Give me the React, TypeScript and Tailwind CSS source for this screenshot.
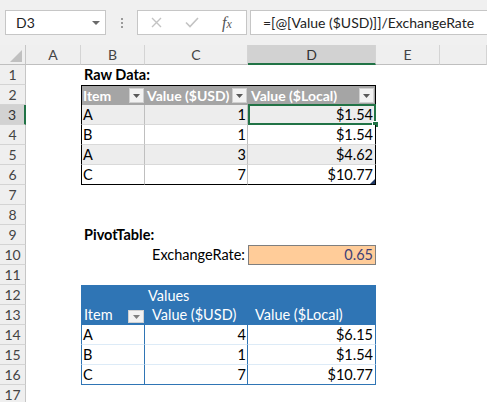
import clsx from 'clsx';
import type { ReactNode } from 'react';

const GRID = 'grid grid-cols-[26px_55px_64px_103px_128px_64px_1fr]';

function C({ className, children }: { className?: string; children?: ReactNode }) {
  return (
    <div className={clsx('relative h-[20px] flex items-center whitespace-nowrap text-[14.5px]', className)}>{children}</div>
  );
}

function Row({ n, sel, children }: { n: number; sel?: boolean; children: ReactNode }) {
  return (
    <div className={GRID}>
      <div
        className={clsx(
          'h-[20px] flex items-center justify-center text-[14px] border-b border-b-[#d4d4d4]',
          sel ? 'bg-[#d2d2d2] border-r-2 border-r-[#217346] text-[#333]' : 'bg-[#efefef] border-r border-r-[#c6c6c6] text-[#444]'
        )}
      >
        {n}
      </div>
      {children}
    </div>
  );
}

function Blank({ count }: { count: number }) {
  return (
    <>
      {Array.from({ length: count }).map((_, i) => (
        <C key={i} />
      ))}
    </>
  );
}

function DropButton({ pivot }: { pivot?: boolean }) {
  return (
    <div
      className={clsx(
        'ml-auto shrink-0 flex items-center justify-center bg-[#f2f2f2] border border-[#d0d0d0]',
        pivot ? 'w-[16px] h-[13px] mr-[1px] self-end mb-[2px]' : 'w-[15px] h-[15px] mr-[1px]'
      )}
    >
      <svg width="7" height="4" viewBox="0 0 7 4">
        <path d="M0 0h7L3.5 4z" fill={pivot ? '#7f7f7f' : '#595959'} />
      </svg>
    </div>
  );
}

function RawRow({ n, item, usd, local, band, last, sel }: { n: number; item: string; usd: string; local: string; band?: boolean; last?: boolean; sel?: boolean }) {
  const bg = band ? 'bg-[#ededed]' : 'bg-white';
  const bottom = last ? 'border-b border-b-black' : 'border-b border-b-[#d9d9d9]';
  return (
    <Row n={n} sel={sel}>
      <C />
      <C className={clsx(bg, bottom, 'border-l border-l-black border-r border-r-[#bfbfbf] pl-[1px]')}>{item}</C>
      <C className={clsx(bg, bottom, 'border-r border-r-[#bfbfbf] justify-end pr-[1px]')}>{usd}</C>
      <C className={clsx(bg, bottom, 'border-r border-r-black justify-end pr-[2px]')}>
        {local}
        {sel && (
          <>
            <div className="absolute -top-[1px] left-0 -right-[1px] -bottom-[1px] border-2 border-[#217346]" />
            <div className="absolute -right-[4px] -bottom-[4px] w-[7px] h-[7px] bg-[#217346] border border-white" />
          </>
        )}
        {last && (
          <svg className="absolute right-0 bottom-0" width="5" height="5" viewBox="0 0 5 5">
            <path d="M5 0v5H0z" fill="#1f3864" />
          </svg>
        )}
      </C>
      <Blank count={2} />
    </Row>
  );
}

function PivotRow({ n, item, usd, local, last }: { n: number; item: string; usd: string; local: string; last?: boolean }) {
  const bottom = last ? 'border-b border-b-[#2f75b5]' : 'border-b border-b-[#ddebf7]';
  return (
    <Row n={n}>
      <C />
      <C className={clsx(bottom, 'border-l border-l-[#2f75b5] border-r border-r-[#2f75b5] pl-[1px]')}>{item}</C>
      <C className={clsx(bottom, 'border-r border-r-[#2f75b5] justify-end pr-[1px]')}>{usd}</C>
      <C className={clsx(bottom, 'border-r border-r-[#2f75b5] justify-end pr-[2px]')}>{local}</C>
      <Blank count={2} />
    </Row>
  );
}

export default function App() {
  return (
    <div className="w-[487px] h-[402px] overflow-hidden bg-white text-black font-['Lato','Liberation_Sans',sans-serif]">
      {/* Name box + formula bar */}
      <div className="h-[45px] bg-[#f0f0f0] flex items-center">
        <div className="ml-[5px] w-[101px] h-[25px] bg-white border border-[#c6c6c6] flex items-center pl-[10px] pr-[5px] text-[14px] text-[#222]">
          <span>D3</span>
          <svg className="ml-auto" width="8" height="4" viewBox="0 0 8 4">
            <path d="M0 0h8L4 4z" fill="#6a6a6a" />
          </svg>
        </div>
        <div className="w-[31px] flex flex-col items-center gap-[2px]">
          <span className="w-[2px] h-[2px] bg-[#9a9a9a]" />
          <span className="w-[2px] h-[2px] bg-[#9a9a9a]" />
          <span className="w-[2px] h-[2px] bg-[#9a9a9a]" />
        </div>
        <div className="w-[110px] h-[25px] bg-white border border-[#c6c6c6] flex items-center">
          <svg className="ml-[13px]" width="11" height="11" viewBox="0 0 11 11">
            <path d="M1 1l9 9M10 1l-9 9" stroke="#c3c3c3" strokeWidth="1.4" />
          </svg>
          <svg className="ml-[23px]" width="14" height="11" viewBox="0 0 14 11">
            <path d="M1 5.5l4 4L13 1" stroke="#c3c3c3" strokeWidth="1.6" fill="none" />
          </svg>
          <span className="ml-[23px] italic text-[16px] text-[#555] font-['Liberation_Serif',serif] leading-none">
            f<span className="text-[12px]">x</span>
          </span>
        </div>
        <div className="ml-[3px] flex-1 h-[25px] bg-white border border-r-0 border-[#c6c6c6] flex items-center pl-[12px] text-[14px] text-[#222] whitespace-nowrap overflow-hidden">
          =[@[Value ($USD)]]/ExchangeRate
        </div>
      </div>

      {/* Column headers */}
      <div className={GRID}>
        <div className="relative h-[20px] bg-[#efefef] border-r border-r-[#c6c6c6] border-b border-b-[#bfbfbf]">
          <svg className="absolute left-[10px] top-[5px]" width="12" height="12" viewBox="0 0 12 12">
            <path d="M12 0v12H0z" fill="#c0c0c0" />
          </svg>
        </div>
        {['A', 'B', 'C', 'D', 'E', ''].map((l) => (
          <div
            key={l || 'F'}
            className={clsx(
              'h-[20px] flex items-center justify-center text-[14px] border-r border-r-[#d4d4d4]',
              l === 'D' ? 'bg-[#d2d2d2] border-b-2 border-b-[#217346] text-[#333]' : 'bg-[#efefef] border-b border-b-[#bfbfbf] text-[#444]'
            )}
          >
            {l}
          </div>
        ))}
      </div>

      <Row n={1}>
        <C />
        <C className="pl-[3px] font-bold">Raw Data:</C>
        <Blank count={4} />
      </Row>

      <Row n={2}>
        <C />
        <C className="bg-[#a5a5a5] border-t border-t-black border-l border-l-black pl-[1px] text-white font-bold text-[14px]">
          Item
          <DropButton />
        </C>
        <C className="bg-[#a5a5a5] border-t border-t-black pl-[2px] text-white font-bold text-[14px]">
          Value ($USD)
          <DropButton />
        </C>
        <C className="bg-[#a5a5a5] border-t border-t-black border-r border-r-black pl-[3px] text-white font-bold text-[14px]">
          Value ($Local)
          <DropButton />
        </C>
        <Blank count={2} />
      </Row>

      <RawRow n={3} item="A" usd="1" local="$1.54" band sel />
      <RawRow n={4} item="B" usd="1" local="$1.54" />
      <RawRow n={5} item="A" usd="3" local="$4.62" band />
      <RawRow n={6} item="C" usd="7" local="$10.77" last />

      <Row n={7}>
        <Blank count={6} />
      </Row>
      <Row n={8}>
        <Blank count={6} />
      </Row>

      <Row n={9}>
        <C />
        <C className="pl-[3px] font-bold">PivotTable:</C>
        <Blank count={4} />
      </Row>

      <Row n={10}>
        <C />
        <C />
        <C className="justify-end pr-[3px]">ExchangeRate:</C>
        <C className="bg-[#ffcc99] border border-[#7f7f7f] justify-end pr-[2px] text-[#3f3f76]">0.65</C>
        <Blank count={2} />
      </Row>

      <Row n={11}>
        <Blank count={6} />
      </Row>

      <Row n={12}>
        <C />
        <C className="bg-[#2f75b5] border-t border-t-[#2f75b5]" />
        <C className="bg-[#2f75b5] border-t border-t-[#2f75b5] pl-[3px] text-white">Values</C>
        <C className="bg-[#2f75b5] border-t border-t-[#2f75b5]" />
        <Blank count={2} />
      </Row>

      <Row n={13}>
        <C />
        <C className="bg-[#2f75b5] pl-[3px] text-white">
          Item
          <DropButton pivot />
        </C>
        <C className="bg-[#2f75b5] pl-[7px] text-white">Value ($USD)</C>
        <C className="bg-[#2f75b5] pl-[7px] text-white">Value ($Local)</C>
        <Blank count={2} />
      </Row>

      <PivotRow n={14} item="A" usd="4" local="$6.15" />
      <PivotRow n={15} item="B" usd="1" local="$1.54" />
      <PivotRow n={16} item="C" usd="7" local="$10.77" last />

      <Row n={17}>
        <Blank count={6} />
      </Row>
    </div>
  );
}
